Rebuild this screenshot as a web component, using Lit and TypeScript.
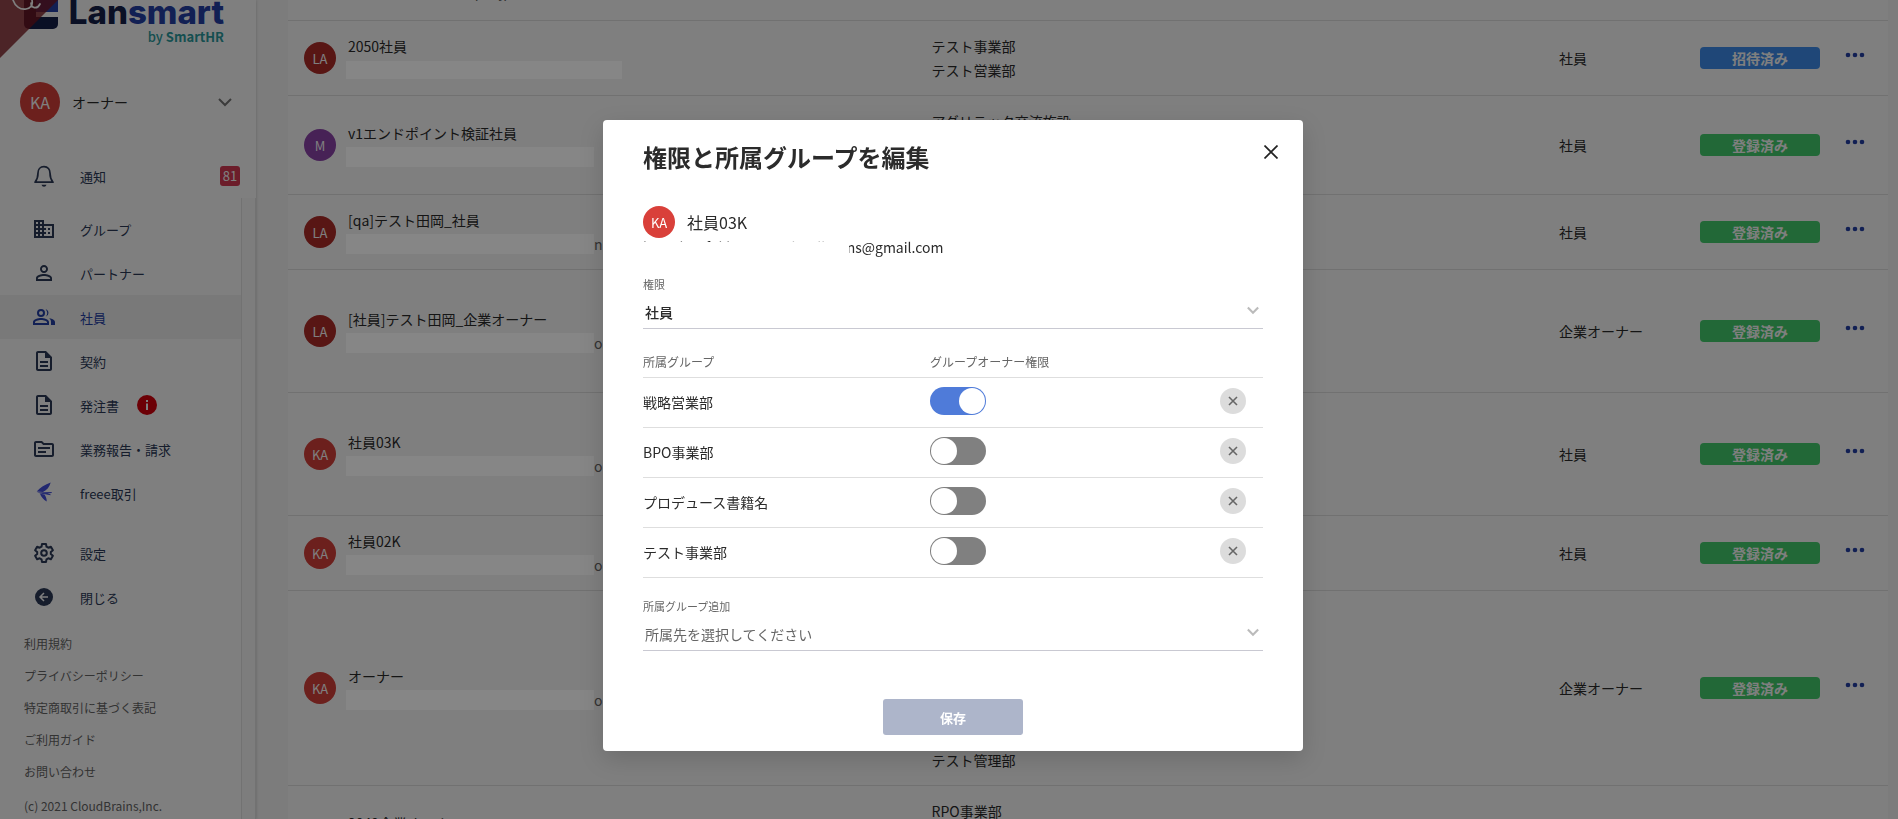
import { LitElement, html, css, svg, nothing } from "lit";
import { customElement, property, state } from "lit/decorators.js";

const baseText = css`
  :host {
    font-family: "Noto Sans CJK JP", "Noto Sans", sans-serif;
    font-size: 14px;
    color: #2b2b2b;
  }
  * {
    box-sizing: border-box;
  }
  button,
  select,
  input {
    font: inherit;
    color: inherit;
    margin: 0;
  }
  button {
    border: 0;
    padding: 0;
    background: none;
    cursor: pointer;
  }
`;

const icons: Record<string, unknown> = {
  bell: svg`<path d="M12 2.600c-3.900 0-6 2.900-6 6.300 0 5.200-1.300 7.200-3 9.300h18c-1.700-2.100-3-4.100-3-9.300 0-3.400-2.100-6.300-6-6.300z" fill="none" stroke="currentColor" stroke-width="1.700" stroke-linejoin="round"/><path d="M9.500 20.800h5a2.600 2.600 0 0 1-5 0z"/>`,
  building: svg`<path d="M12 7V3H2v18h20V7H12zM6 19H4v-2h2v2zm0-4H4v-2h2v2zm0-4H4V9h2v2zm0-4H4V5h2v2zm4 12H8v-2h2v2zm0-4H8v-2h2v2zm0-4H8V9h2v2zm0-4H8V5h2v2zm10 12h-8v-2h2v-2h-2v-2h2v-2h-2V9h8v10zm-2-8h-2v2h2v-2zm0 4h-2v2h2v-2z"/>`,
  person: svg`<path d="M12 5.900c1.160 0 2.100.94 2.100 2.100s-.94 2.100-2.100 2.100S9.900 9.160 9.900 8s.94-2.100 2.100-2.100m0 9c2.970 0 6.100 1.460 6.100 2.100v1.100H5.900V17c0-.64 3.130-2.100 6.100-2.100M12 4C9.790 4 8 5.790 8 8s1.790 4 4 4 4-1.790 4-4-1.790-4-4-4zm0 9c-2.670 0-8 1.340-8 4v3h16v-3c0-2.660-5.330-4-8-4z"/>`,
  people: svg`<path d="M9 4a4 4 0 1 0 0 8 4 4 0 0 0 0-8zm0 6a2 2 0 1 1 0-4 2 2 0 0 1 0 4zm0 3c-2.670 0-8 1.340-8 4v3h16v-3c0-2.660-5.330-4-8-4zm6 5H3v-1c0-.72 3.100-2 6-2s6 1.280 6 2v1zM13.700 11.800A4 4 0 0 0 13.700 4.200a6 6 0 0 1 0 7.600zM17 13.300c1.300.9 2 2.100 2 3.700v3h4v-3c0-2.180-3.580-3.470-6-3.700z"/>`,
  doc: svg`<path d="M8 16h8v2H8zm0-4h8v2H8zm6-10H6c-1.100 0-2 .9-2 2v16c0 1.100.89 2 1.990 2H18c1.100 0 2-.9 2-2V8l-6-6zm4 18H6V4h7v5h5v11z"/>`,
  folder: svg`<path d="M20 6h-8l-2-2H4c-1.110 0-2 .9-2 2v12c0 1.100.89 2 2 2h16c1.110 0 2-.9 2-2V8c0-1.100-.89-2-2-2zm0 12H4V6h5.200l2 2H20v10zm-2-6H6v-2h12v2zm-4 4H6v-2h8v2z"/>`,
  freee: svg`<path d="M18.700 1.500C13 3.500 8 6.800 4.700 10.600l6.300.4c4-2 6.500-5 7.700-9.500zM5 11.400l14.700-.4v1l-8.700 1zM8 12.800c1 3 3.500 6 6.700 7.800.2-2.600-.7-5-2.200-7.200zM12 13l6.500 1.200v-.9l-3-.9z"/>`,
  gear: svg`<path fill="none" stroke="currentColor" stroke-width="2" stroke-linejoin="round" d="M10 3h4l.5 2.700 1.800 1 2.600-.9 2 3.400-2.100 1.800v2l2.100 1.800-2 3.400-2.600-.9-1.800 1L14 21h-4l-.5-2.700-1.800-1-2.600.9-2-3.400L5.200 13v-2L3.100 9.200l2-3.400 2.600.9 1.800-1z"/><circle cx="12" cy="12" r="2.800" fill="none" stroke="currentColor" stroke-width="2"/>`,
  back: svg`<circle cx="12" cy="12" r="9"/><path d="M16 12H8m4-4-4 4 4 4" fill="none" stroke="#fff" stroke-width="1.500"/>`,
  info: svg`<circle cx="12" cy="12" r="10"/><path d="M11 10.500h2V17h-2zM11 7h2v2h-2z" fill="#fff"/>`,
};

const icon = (name: string, size = 24) =>
  html`<svg viewBox="0 0 24 24" width=${size} height=${size} fill="currentColor" aria-hidden="true">${icons[name]}</svg>`;

const chevron = html`<svg viewBox="0 0 14 9" width="14" height="9" fill="none" stroke="currentColor" stroke-width="2" aria-hidden="true"><path d="M1 1l6 6 6-6" /></svg>`;

@customElement("user-avatar")
class UserAvatar extends LitElement {
  @property() initials = "";
  @property({ reflect: true }) tone = "red";
  @property({ reflect: true }) size = "m";
  static styles = css`
    :host {
      display: grid;
      place-items: center;
      flex: none;
      width: 32px;
      height: 32px;
      border-radius: 50%;
      background: #d9403a;
      color: #fff;
      font: 13px/1 "Noto Sans CJK JP", sans-serif;
    }
    :host([tone="dark"]) {
      background: #b02c28;
    }
    :host([tone="purple"]) {
      background: #8e44ad;
    }
    :host([size="l"]) {
      width: 40px;
      height: 40px;
      font-size: 16px;
    }
  `;
  render() {
    return html`${this.initials}`;
  }
}

@customElement("side-bar")
class SideBar extends LitElement {
  static styles = [
    baseText,
    css`
      :host {
        display: flex;
        flex-direction: column;
        flex: none;
        width: 256px;
        height: 100vh;
        overflow: hidden;
        background: #fff;
        box-shadow: 0 0 3px rgba(0, 0, 0, 0.2);
        color: #2c3a59;
        font-size: 13px;
      }
      .logo {
        display: flex;
        justify-content: space-between;
        align-items: flex-start;
        height: 62px;
        margin-top: -12px;
        padding: 0 32px 0 24px;
      }
      .words {
        display: flex;
        flex-direction: column;
        align-items: flex-end;
        padding-top: 6px;
      }
      .brand {
        font: 800 33px/36px Inter, sans-serif;
        color: #14204a;
      }
      .brand b {
        font-weight: 800;
        color: #2540a8;
      }
      .by {
        font-size: 13px;
        line-height: 14px;
        font-weight: 500;
        color: #2b9da0;
      }
      .by b {
        font-weight: 700;
      }
      .account {
        display: flex;
        align-items: center;
        gap: 12px;
        width: 100%;
        padding: 32px 24px 0 20px;
        font-size: 14px;
        color: #2b2b2b;
        text-align: left;
      }
      .account span {
        flex: 1;
      }
      .account svg {
        color: #777;
      }
      .item {
        display: flex;
        align-items: center;
        height: 44px;
        padding-left: 32px;
        color: inherit;
        text-decoration: none;
      }
      .item svg {
        margin-right: 24px;
      }
      .notice {
        margin-top: 32px;
        padding-right: 16px;
      }
      .notice span {
        flex: 1;
      }
      .count {
        width: 20px;
        border-radius: 3px;
        background: #d83a54;
        color: #fff;
        line-height: 20px;
        text-align: center;
        font-weight: 400;
      }
      .active {
        background: #f2f2f2;
        color: #2540a8;
      }
      .alert {
        display: flex;
        margin-left: 16px;
        color: #d8000c;
      }
      .alert svg {
        margin: 0;
      }
      .freee svg {
        color: #4450e0;
      }
      .below {
        display: flex;
        flex: 1;
        min-height: 0;
      }
      .list {
        flex: 1;
        padding-top: 9px;
      }
      .track {
        width: 15px;
        border: solid #e4e4e4;
        border-width: 0 1px;
        background: #fafafa;
      }
      .gap {
        margin-top: 16px;
      }
      .legal {
        display: flex;
        flex-direction: column;
        padding: 9px 24px;
        font-size: 12px;
        line-height: 32px;
        color: #666;
      }
      .legal a {
        color: inherit;
        text-decoration: none;
      }
      small {
        font-size: 12px;
        line-height: 36px;
      }
    `,
  ];
  render() {
    const nav = [
      ["building", "グループ"],
      ["person", "パートナー"],
      ["people", "社員"],
      ["doc", "契約"],
      ["doc", "発注書"],
      ["folder", "業務報告・請求"],
      ["freee", "freee取引"],
      ["gear", "設定"],
      ["back", "閉じる"],
    ];
    const extra: Record<string, string> = { 社員: "active", freee取引: "freee", 設定: "gap" };
    return html`
      <div class="logo">
        <svg viewBox="0 0 34 41" width="34" height="41" aria-hidden="true">
          <path d="M0 0h34v36a5 5 0 0 1-5 5H5a5 5 0 0 1-5-5z" fill="#14204a" />
          <path d="M12 0h22v24H12z" fill="#2540a8" />
          <path d="M12 24h22v5H12z" fill="#fff" />
        </svg>
        <div class="words">
          <div class="brand">Lan<b>smart</b></div>
          <div class="by">by <b>SmartHR</b></div>
        </div>
      </div>
      <button class="account">
        <user-avatar initials="KA" size="l"></user-avatar>
        <span>オーナー</span>${chevron}
      </button>
      <a class="item notice" href="#">${icon("bell")}<span>通知</span><b class="count">81</b></a>
      <div class="below">
        <nav class="list">
          ${nav.map(
            ([glyph, label]) => html`<a class="item ${extra[label] ?? ""}" href="#"
              >${icon(glyph)}${label}${label === "発注書" ? html`<span class="alert">${icon("info")}</span>` : nothing}</a
            >`
          )}
          <div class="legal">
            ${["利用規約", "プライバシーポリシー", "特定商取引に基づく表記", "ご利用ガイド", "お問い合わせ"].map(
              (t) => html`<a href="#">${t}</a>`
            )}
            <small>(c) 2021 CloudBrains,Inc.</small>
          </div>
        </nav>
        <div class="track"></div>
      </div>
    `;
  }
}

interface Member {
  name: string;
  initials: string;
  tone: string;
  mail?: string;
  tail?: string;
  wide?: boolean;
  groups: string[];
  role: string;
  invited?: boolean;
}

const members: Member[] = [
  { name: "社員", initials: "LA", tone: "dark", mail: "lansmart.test@sample.jp", groups: [], role: "社員" },
  { name: "2050社員", initials: "LA", tone: "dark", wide: true, groups: ["テスト事業部", "テスト営業部"], role: "社員", invited: true },
  { name: "v1エンドポイント検証社員", initials: "M", tone: "purple", groups: ["アグリテック交流施設", "テスト事業部", "テスト営業部"], role: "社員" },
  { name: "[qa]テスト田岡_社員", initials: "LA", tone: "dark", tail: "n", groups: ["テスト事業部"], role: "社員" },
  { name: "[社員]テスト田岡_企業オーナー", initials: "LA", tone: "dark", tail: "o.j", groups: ["テスト事業部", "テスト営業部", "BPO事業部", "戦略営業部"], role: "企業オーナー" },
  { name: "社員03K", initials: "KA", tone: "red", tail: "om", groups: ["戦略営業部", "BPO事業部", "プロデュース書籍名", "テスト事業部"], role: "社員" },
  { name: "社員02K", initials: "KA", tone: "red", tail: "om", groups: ["テスト事業部"], role: "社員" },
  { name: "オーナー", initials: "KA", tone: "red", tail: "om", groups: ["戦略営業部", "BPO事業部", "プロデュース書籍名", "テスト事業部", "テスト営業部", "RPO事業部", "テスト管理部"], role: "企業オーナー" },
  { name: "2049企業オーナー", initials: "LA", tone: "dark", groups: ["RPO事業部", "テスト事業部", "テスト営業部"], role: "企業オーナー" },
];

@customElement("member-table")
class MemberTable extends LitElement {
  static styles = [
    baseText,
    css`
      :host {
        display: block;
        background: #fff;
        margin-top: -54px;
      }
      table {
        width: 100%;
        table-layout: fixed;
        border-collapse: separate;
        border-spacing: 0;
      }
      .role-col {
        width: 141px;
      }
      .status-col {
        width: 145px;
      }
      .menu-col {
        width: 59px;
      }
      td {
        padding: 13px 0 13px 16px;
        border-bottom: 1px solid #e2e2e2;
        line-height: 24px;
      }
      .person {
        display: flex;
        align-items: center;
        gap: 10px;
      }
      .name {
        padding: 1px 2px 0;
        line-height: 23px;
      }
      .mail {
        display: flex;
        align-items: center;
        height: 24px;
        color: #666;
      }
      .full {
        align-self: flex-start;
        padding-left: 2px;
        line-height: 16px;
      }
      .mask {
        position: relative;
        z-index: 2;
        width: 248px;
        height: 20px;
        background: #868686;
      }
      .mask.wide {
        width: 276px;
        height: 18px;
      }
      .badge {
        display: block;
        width: 120px;
        border-radius: 4px;
        background: #44d06e;
        color: #fff;
        font-weight: 700;
        line-height: 22px;
        text-align: center;
      }
      .invited {
        background: #3f8ff0;
      }
      .more {
        display: flex;
        padding-bottom: 6px;
        color: #2540a8;
      }
    `,
  ];
  render() {
    return html`<table>
      <colgroup>
        <col />
        <col />
        <col class="role-col" />
        <col class="status-col" />
        <col class="menu-col" />
      </colgroup>
      <tbody>
        ${members.map(
          (m) => html`<tr>
            <td>
              <div class="person">
                <user-avatar initials=${m.initials} tone=${m.tone}></user-avatar>
                <div>
                  <div class="name">${m.name}</div>
                  <div class="mail">
                    ${m.mail
                      ? html`<span class="full">${m.mail}</span>`
                      : html`<span class="mask ${m.wide ? "wide" : ""}"></span>${m.tail ?? nothing}`}
                  </div>
                </div>
              </div>
            </td>
            <td>${m.groups.map((g) => html`<div>${g}</div>`)}</td>
            <td>${m.role}</td>
            <td><span class="badge ${m.invited ? "invited" : ""}">${m.invited ? "招待済み" : "登録済み"}</span></td>
            <td>
              <button class="more" aria-label="メニュー">
                <svg viewBox="0 0 20 6" width="20" height="6" fill="currentColor">
                  <circle cx="3" cy="3" r="2.300" />
                  <circle cx="10" cy="3" r="2.300" />
                  <circle cx="17" cy="3" r="2.300" />
                </svg>
              </button>
            </td>
          </tr>`
        )}
      </tbody>
    </table>`;
  }
}

@customElement("edit-dialog")
class EditDialog extends LitElement {
  @state() groups = [
    { name: "戦略営業部", owner: true },
    { name: "BPO事業部", owner: false },
    { name: "プロデュース書籍名", owner: false },
    { name: "テスト事業部", owner: false },
  ];
  static styles = [
    baseText,
    css`
      :host {
        display: block;
        width: 700px;
        max-width: 100%;
        padding: 16px 40px;
        border-radius: 4px;
        background: #fff;
        box-shadow: 0 8px 24px rgba(0, 0, 0, 0.15);
      }
      header {
        display: flex;
        justify-content: space-between;
        margin-right: -24px;
      }
      h1 {
        margin: 0;
        padding-top: 4px;
        font-size: 24px;
        line-height: 34px;
      }
      .close {
        display: grid;
        place-items: center;
        width: 32px;
        height: 32px;
      }
      .who {
        display: flex;
        align-items: center;
        gap: 12px;
        margin-top: 32px;
        font-size: 16px;
        line-height: 32px;
      }
      .mail {
        position: relative;
        line-height: 18px;
        margin-bottom: 20px;
      }
      .cover {
        position: absolute;
        left: 1px;
        top: 4px;
        width: 205px;
        height: 16px;
        background: #fff;
      }
      label {
        display: block;
        font-size: 11px;
        line-height: 16px;
        color: #666;
      }
      .pick {
        display: flex;
        align-items: center;
        border-bottom: 1px solid #c9c9d2;
      }
      select {
        flex: 1;
        height: 36px;
        padding: 4px 0 0 2px;
        border: 0;
        background: none;
        appearance: none;
        font-weight: 500;
      }
      select.empty {
        color: #666;
        font-weight: 400;
      }
      .pick svg {
        flex: none;
        width: 12px;
        margin: 0 4px 0 -16px;
        color: #bbb;
        stroke-width: 2.5;
        pointer-events: none;
      }
      table {
        width: 100%;
        margin: 16px 0 20px;
        table-layout: fixed;
        border-collapse: separate;
        border-spacing: 0;
      }
      th {
        height: 33px;
        padding: 0;
        border-bottom: 1px solid #dedede;
        font-size: 12px;
        font-weight: 400;
        text-align: left;
        color: #666;
      }
      td {
        height: 50px;
        padding: 0 0 1px;
        border-bottom: 1px solid #dedede;
      }
      .owner-col {
        width: 290px;
      }
      .remove-col {
        width: 43px;
      }
      .switch,
      .remove {
        display: block;
        margin-bottom: 3px;
      }
      .switch {
        appearance: none;
        width: 56px;
        height: 28px;
        padding: 1px;
        border-radius: 14px;
        background: #808080;
      }
      .switch::before {
        content: "";
        display: block;
        width: 26px;
        height: 26px;
        border-radius: 50%;
        background: #fff;
      }
      .switch:checked {
        background: #4f7bd9;
      }
      .switch:checked::before {
        margin-left: auto;
      }
      .remove {
        display: grid;
        place-items: center;
        width: 26px;
        height: 26px;
        border-radius: 50%;
        background: #dcdcdc;
        color: #666;
      }
      .save {
        display: block;
        width: 140px;
        height: 36px;
        margin: 48px auto 0;
        border-radius: 3px;
        background: #adb5ca;
        color: #fff;
        font-size: 13px;
        font-weight: 700;
      }
    `,
  ];
  private toggle(i: number) {
    this.groups = this.groups.map((g, n) => (n === i ? { ...g, owner: !g.owner } : g));
  }
  private remove(i: number) {
    this.groups = this.groups.filter((_, n) => n !== i);
  }
  render() {
    return html`
      <header>
        <h1>権限と所属グループを編集</h1>
        <button class="close" aria-label="閉じる">
          <svg viewBox="0 0 14 14" width="14" height="14" stroke="#222" stroke-width="1.700"><path d="M.5.5l13 13M13.500.5l-13 13" /></svg>
        </button>
      </header>
      <div class="who"><user-avatar initials="KA"></user-avatar>社員03K</div>
      <div class="mail">kataokas.fukki01+03+cloudbrains@gmail.com<span class="cover"></span></div>
      <label for="role">権限</label>
      <div class="pick">
        <select id="role">
          <option>社員</option>
          <option>企業オーナー</option></select
        >${chevron}
      </div>
      <table>
        <colgroup>
          <col />
          <col class="owner-col" />
          <col class="remove-col" />
        </colgroup>
        <thead>
          <tr>
            <th>所属グループ</th>
            <th>グループオーナー権限</th>
            <th></th>
          </tr>
        </thead>
        <tbody>
          ${this.groups.map(
            (g, i) => html`<tr>
              <td>${g.name}</td>
              <td>
                <input
                  class="switch"
                  type="checkbox"
                  role="switch"
                  aria-label="${g.name} グループオーナー権限"
                  .checked=${g.owner}
                  @change=${() => this.toggle(i)}
                />
              </td>
              <td>
                <button class="remove" aria-label="${g.name}を外す" @click=${() => this.remove(i)}>
                  <svg viewBox="0 0 10 10" width="10" height="10" stroke="currentColor" stroke-width="1.600"><path d="M1 1l8 8M9 1L1 9" /></svg>
                </button>
              </td>
            </tr>`
          )}
        </tbody>
      </table>
      <label for="add">所属グループ追加</label>
      <div class="pick">
        <select id="add" class="empty">
          <option>所属先を選択してください</option></select
        >${chevron}
      </div>
      <button class="save">保存</button>
    `;
  }
}

@customElement("app-root")
class AppRoot extends LitElement {
  static styles = [
    baseText,
    css`
      :host {
        display: flex;
        height: 100vh;
        overflow: hidden;
        background: #f8f8f8;
      }
      main {
        flex: 1;
        min-width: 0;
        overflow: hidden;
        padding: 0 10px 0 32px;
      }
      .backdrop,
      .layer {
        position: fixed;
        inset: 0;
      }
      .backdrop {
        z-index: 1;
        background: rgba(0, 0, 0, 0.5);
      }
      .layer {
        z-index: 3;
        display: flex;
        justify-content: center;
        align-items: flex-start;
        padding: 120px 0 0 8px;
      }
      .ribbon {
        position: fixed;
        left: 0;
        top: 0;
      }
    `,
  ];
  render() {
    return html`
      <side-bar></side-bar>
      <main><member-table></member-table></main>
      <svg class="ribbon" viewBox="0 0 58 58" width="58" height="58" aria-hidden="true">
        <path d="M0 0h58L0 58z" fill="#7c161c" fill-opacity=".78" />
        <path d="M13 0c2 6 7 10 13 9 5-1 7-4 6-9M31 3c0 5 6 7 9 1" fill="none" stroke="#fff" stroke-width="1.700" stroke-linecap="round" />
      </svg>
      <div class="backdrop"></div>
      <div class="layer"><edit-dialog role="dialog" aria-modal="true"></edit-dialog></div>
    `;
  }
}
